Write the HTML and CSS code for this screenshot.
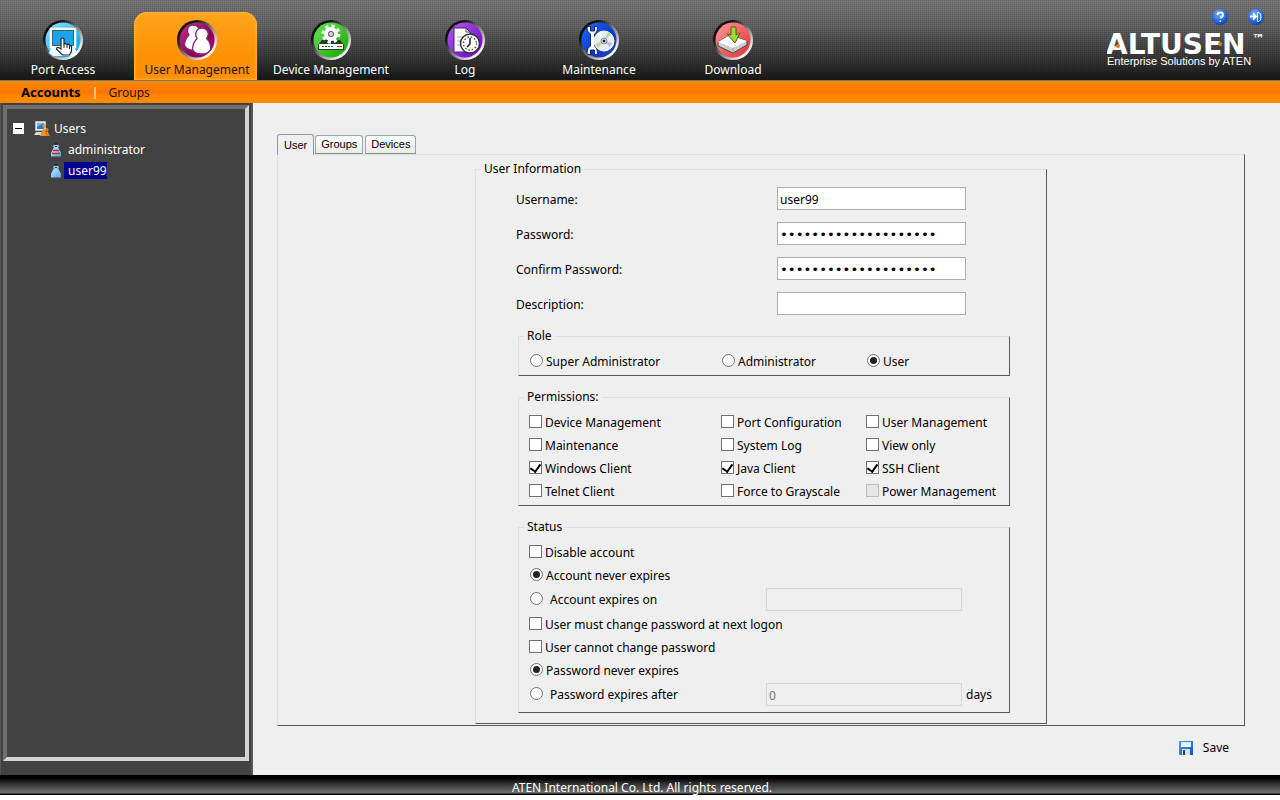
FILE: index.html
```html
<!DOCTYPE html>
<html lang="en">
<head>
  <meta charset="UTF-8">
  <meta name="viewport" content="width=device-width, initial-scale=1.0">
  <title>User Management</title>
  <link rel="stylesheet" href="styles.css">
</head>
<body>
  <!-- Shared gradients for the header icons -->
  <svg class="defs" aria-hidden="true">
    <defs>
      <linearGradient id="ring" x1="0" y1="0" x2="1" y2="1">
        <stop offset="0.25" stop-color="#111"/>
        <stop offset="0.6" stop-color="#999"/>
        <stop offset="0.85" stop-color="#fff"/>
      </linearGradient>
      <linearGradient id="cyan" x1="0" y1="0" x2="1" y2="1">
        <stop offset="0" stop-color="#8fe6ff"/>
        <stop offset="1" stop-color="#009be0"/>
      </linearGradient>
      <linearGradient id="plum" x1="0" y1="0" x2="1" y2="1">
        <stop offset="0" stop-color="#d0338c"/>
        <stop offset="0.6" stop-color="#8e004f"/>
        <stop offset="1" stop-color="#b80a70"/>
      </linearGradient>
      <linearGradient id="green" x1="0" y1="0" x2="1" y2="1">
        <stop offset="0" stop-color="#6de05a"/>
        <stop offset="1" stop-color="#12a800"/>
      </linearGradient>
      <linearGradient id="violet" x1="0" y1="0" x2="1" y2="1">
        <stop offset="0" stop-color="#b35cf0"/>
        <stop offset="1" stop-color="#6a00c4"/>
      </linearGradient>
      <linearGradient id="blue" x1="0" y1="0" x2="1" y2="1">
        <stop offset="0" stop-color="#1f6dff"/>
        <stop offset="0.6" stop-color="#0a35d0"/>
        <stop offset="1" stop-color="#2c4a9c"/>
      </linearGradient>
      <linearGradient id="red" x1="0" y1="0" x2="1" y2="1">
        <stop offset="0" stop-color="#ff9a94"/>
        <stop offset="1" stop-color="#e02f35"/>
      </linearGradient>
      <radialGradient id="ball" cx="0.4" cy="0.3" r="0.7">
        <stop offset="0" stop-color="#6fb0ff"/>
        <stop offset="1" stop-color="#0a44c0"/>
      </radialGradient>
      <linearGradient id="person" x1="0" y1="0" x2="1" y2="1">
        <stop offset="0" stop-color="#c8e8ff"/>
        <stop offset="1" stop-color="#4fa8f4"/>
      </linearGradient>
      <linearGradient id="disk" x1="0" y1="0" x2="1" y2="1">
        <stop offset="0" stop-color="#35a6ff"/>
        <stop offset="1" stop-color="#0b4fc4"/>
      </linearGradient>
      <linearGradient id="shutter" x1="0" y1="0" x2="0" y2="1">
        <stop offset="0" stop-color="#d4e4f4"/>
        <stop offset="1" stop-color="#fff"/>
      </linearGradient>
    </defs>
  </svg>

  <header class="header">
    <nav class="main-nav">
      <a href="#" class="nav-item">
        <svg viewBox="0 0 40 40">
          <circle cx="20" cy="20" r="20" fill="url(#ring)"/>
          <circle cx="20" cy="20" r="17.5" fill="url(#cyan)"/>
          <path d="M8 28h24l2 5-4 3H10l-4-3z" fill="#e8f8ff"/>
          <path d="M8 9h24v18H8z" fill="#1ba4e8" stroke="#fff" stroke-width="2.5"/>
          <path d="M9.500 10.500h21v15h-21z" fill="none" stroke="#35617c" stroke-width="1"/>
          <path d="M18 19q1.500-2 3 0v5l1.500-.5 1.500 1 1.500-.5 1 1.500 2 .5v5l-2 4h-7l-6-6q0-2 2-1.500l2.500 1.500z" fill="#fff" stroke="#222" stroke-width="1.200"/>
          <path d="M21 24v4M24 25v3M26.500 26v3" stroke="#222" stroke-width="1"/>
        </svg>
        <span>Port Access</span>
      </a>
      <a href="#" class="nav-item active">
        <svg viewBox="0 0 40 40">
          <circle cx="20" cy="20" r="20" fill="url(#ring)"/>
          <circle cx="20" cy="20" r="17.500" fill="url(#plum)"/>
          <g fill="#fff" stroke="#7d2b78" stroke-width="1.300">
            <path d="M16 5c4 0 6.500 3 6 6.500-.3 2-1 3-1.500 4.500l3 5-4 9c-6 1-10.500-1.500-12-4.500 0-5 2-8 4.500-10.500C9 11 10.500 5 16 5z"/>
            <path d="M25 8c4 0 6.500 3 6.200 6.500-.2 2-.9 3-1.700 4 3 2.500 4.500 6 4.300 11-2 3.500-6 4.500-9.800 4.500s-7.500-2-8.500-4.500c0-4.500 1.500-8 4.500-11C17 14 19.500 8 25 8z"/>
          </g>
        </svg>
        <span>User Management</span>
      </a>
      <a href="#" class="nav-item">
        <svg viewBox="0 0 40 40">
          <circle cx="20" cy="20" r="20" fill="url(#ring)"/>
          <circle cx="20" cy="20" r="17.500" fill="url(#green)"/>
          <path d="M11 20h18l4 5v5H7v-5z" fill="#2a3a2a"/>
          <path d="M8 24h24v5H8z" fill="#fff"/>
          <path d="M11 26.500h12" stroke="#248a24" stroke-dasharray="2 1"/>
          <path d="M26 26.500h5" stroke="#d22"/>
          <circle cx="20" cy="14" r="8" fill="none" stroke="#fff" stroke-width="3" stroke-dasharray="3.300 3"/>
          <circle cx="20" cy="14" r="5" fill="#8a8" stroke="#fff" stroke-width="4"/>
          <circle cx="20" cy="14" r="2.500" fill="#ddd" stroke="#555"/>
        </svg>
        <span>Device Management</span>
      </a>
      <a href="#" class="nav-item">
        <svg viewBox="0 0 40 40">
          <circle cx="20" cy="20" r="20" fill="url(#ring)"/>
          <circle cx="20" cy="20" r="17.500" fill="url(#violet)"/>
          <path d="M9 8h12l4 4v20H9z" fill="#fff" stroke="#46226b" stroke-width="1"/>
          <path d="M21 8v4h4" fill="none" stroke="#555"/>
          <path d="M12 17h6M12 21h4M12 25h4" stroke="#aaa"/>
          <circle cx="25" cy="23.500" r="9.500" fill="#fff" stroke="#333" stroke-width="1.500"/>
          <circle cx="25" cy="23.500" r="6.500" fill="#fff" stroke="#555" stroke-width="1.500" stroke-dasharray="1.500 1.900"/>
          <path d="M25 18v6l-3 3" fill="none" stroke="#222" stroke-width="1.500"/>
        </svg>
        <span>Log</span>
      </a>
      <a href="#" class="nav-item">
        <svg viewBox="0 0 40 40">
          <circle cx="20" cy="20" r="20" fill="url(#ring)"/>
          <circle cx="20" cy="20" r="17.500" fill="url(#blue)"/>
          <path d="M8 7c0 3 1 6 3.500 7v12C9 27 8 30 8 34l3.500 1v-5h4v5l3-1c0-4-1-7-3-8V14c2-1 3-4 3-7l-3-1v5h-4V6z" fill="#fff" stroke="#14275c" stroke-width="1"/>
          <circle cx="25" cy="21" r="10" fill="#e8eef2" stroke="#f8f8f8"/>
          <path d="M25 21l-7-7q3-3 6-3z" fill="#fafafa"/>
          <path d="M25 21l4-9 3 2z" fill="#9fdc9a"/>
          <path d="M25 21l8 2-2 4z" fill="#c8b2ee"/>
          <path d="M25 21l-9 3 3 4z" fill="#b7d7a8"/>
          <circle cx="25" cy="21" r="3" fill="#ccd" stroke="#889"/>
          <circle cx="25" cy="21" r="1.300" fill="#123"/>
        </svg>
        <span>Maintenance</span>
      </a>
      <a href="#" class="nav-item">
        <svg viewBox="0 0 40 40">
          <circle cx="20" cy="20" r="20" fill="url(#ring)"/>
          <circle cx="20" cy="20" r="17.500" fill="url(#red)"/>
          <path d="M5 22l12-7 17 6v4l-14 8-15-7z" fill="#ccc" stroke="#444" stroke-width="1"/>
          <path d="M5 22l12-7 17 6-14 7z" fill="#fff"/>
          <path d="M20 28v5" stroke="#999"/>
          <path d="M18 7h5v8l4-2-5 10-8-9 4 1z" fill="#a3d93c" stroke="#47631a" stroke-width="1"/>
        </svg>
        <span>Download</span>
      </a>
    </nav>

    <div class="brand">
      <div class="header-tools">
        <a href="#" aria-label="Help">
          <svg viewBox="0 0 16 16"><circle cx="8" cy="8" r="8" fill="url(#ball)"/><path d="M5.500 6V4.500h1v-1h3.500v1h1V7h-1v1H9v1.500M8.300 11.500v1.500" fill="none" stroke="#fff" stroke-width="1.500"/></svg>
        </a>
        <a href="#" aria-label="Logout">
          <svg viewBox="0 0 16 16"><circle cx="8" cy="8" r="8" fill="url(#ball)"/><path d="M2 7.500h5M5 4.500l3 3-3 3" fill="none" stroke="#fff" stroke-width="1.800"/><path d="M9.500 3.500h1.500q2 1 2 4.500t-2 4.500H9.500z" fill="none" stroke="#fff"/></svg>
        </a>
      </div>
      <svg class="logo" viewBox="0 -6 160 44" role="img">
        <text class="logo-name" x="-1" y="23">ALTUSEN</text>
        <text class="logo-mark" x="145" y="12">™</text>
        <text class="logo-sub" x="0" y="34">Enterprise Solutions by ATEN</text>
        <circle cx="11" cy="15" r="2" fill="#f57c00"/>
        <circle cx="113" cy="13" r="2" fill="#f57c00"/>
      </svg>
    </div>
  </header>

  <nav class="sub-nav">
    <a href="#" class="active">Accounts</a>
    <a href="#">Groups</a>
  </nav>

  <div class="layout">
    <aside class="sidebar">
      <div class="tree">
        <div class="tree-row">
          <button type="button" class="toggle" aria-label="Collapse"></button>
          <svg class="group-icon" viewBox="0 0 16 16">
            <path d="M1.500.5h10v9h-10z" fill="#e8e8e8" stroke="#bbb"/>
            <path d="M3 2h7v6H3z" fill="#2878c8"/>
            <path d="M3 2h7L3 6z" fill="#6cb4f0"/>
            <path d="M2 11h9l1 3H0z" fill="#d8d8d8"/>
            <circle cx="10" cy="5" r="1.800" fill="#f0932b"/>
            <path d="M10 6l3 9H6z" fill="#f0932b"/>
            <circle cx="13" cy="8.500" r="1.500" fill="#e87d1a"/>
            <path d="M13 9l3 6h-5z" fill="#e87d1a"/>
          </svg>
          <a href="#">Users</a>
        </div>
        <div class="tree-row child">
          <svg class="user-icon" viewBox="0 0 10 14">
            <path d="M2.500 5h5L10 10v3.500H0V10z" fill="url(#person)"/>
            <circle cx="5" cy="3" r="2.700" fill="#8ecbf8"/>
            <path d="M2.500 1.800q.5-1.800 2.500-1.800t2.500 1.800z" fill="#111"/>
            <path d="M4 3.500h2" stroke="#234"/>
            <path d="M2 7.500h6M1 10.500h8" stroke="#e0202a" stroke-width="1.500"/>
          </svg>
          <a href="#">administrator</a>
        </div>
        <div class="tree-row child">
          <svg class="user-icon" viewBox="0 0 10 14">
            <path d="M2.500 5h5L10 10v3.500H0V10z" fill="url(#person)"/>
            <circle cx="5" cy="3" r="2.700" fill="#8ecbf8"/>
            <path d="M2.500 1.800q.5-1.800 2.500-1.800t2.500 1.800z" fill="#111"/>
            <path d="M4 3.500h2" stroke="#234"/>
          </svg>
          <a href="#" class="selected">user99</a>
        </div>
      </div>
    </aside>

    <main class="content">
      <form>
        <div class="tabs">
          <button type="button" class="tab active">User</button>
          <button type="button" class="tab">Groups</button>
          <button type="button" class="tab">Devices</button>
        </div>

        <div class="panel">
          <fieldset class="user-info">
            <legend>User Information</legend>

            <div class="fields">
              <label for="username">Username:</label>
              <input type="text" id="username" value="user99">
              <label for="password">Password:</label>
              <input type="password" id="password" value="aaaaaaaaaaaaaaaaaaaa">
              <label for="confirm">Confirm Password:</label>
              <input type="password" id="confirm" value="aaaaaaaaaaaaaaaaaaaa">
              <label for="description">Description:</label>
              <input type="text" id="description">
            </div>

            <fieldset class="group">
              <legend>Role</legend>
              <div class="options">
                <label><input type="radio" name="role">Super Administrator</label>
                <label><input type="radio" name="role">Administrator</label>
                <label><input type="radio" name="role" checked>User</label>
              </div>
            </fieldset>

            <fieldset class="group">
              <legend>Permissions:</legend>
              <div class="options">
                <label><input type="checkbox">Device Management</label>
                <label><input type="checkbox">Port Configuration</label>
                <label><input type="checkbox">User Management</label>
                <label><input type="checkbox">Maintenance</label>
                <label><input type="checkbox">System Log</label>
                <label><input type="checkbox">View only</label>
                <label><input type="checkbox" checked>Windows Client</label>
                <label><input type="checkbox" checked>Java Client</label>
                <label><input type="checkbox" checked>SSH Client</label>
                <label><input type="checkbox">Telnet Client</label>
                <label><input type="checkbox">Force to Grayscale</label>
                <label><input type="checkbox" disabled>Power Management</label>
              </div>
            </fieldset>

            <fieldset class="group">
              <legend>Status</legend>
              <div class="status">
                <label><input type="checkbox">Disable account</label>
                <label><input type="radio" name="account" checked>Account never expires</label>
                <div class="expiry">
                  <label><input type="radio" name="account">Account expires on</label>
                  <input type="text" aria-label="Account expiry date" disabled>
                </div>
                <label><input type="checkbox">User must change password at next logon</label>
                <label><input type="checkbox">User cannot change password</label>
                <label><input type="radio" name="pwd" checked>Password never expires</label>
                <div class="expiry">
                  <label><input type="radio" name="pwd">Password expires after</label>
                  <input type="text" aria-label="Password expiry days" value="0" disabled>
                  <span>days</span>
                </div>
              </div>
            </fieldset>
          </fieldset>
        </div>

        <div class="actions">
          <button type="submit" class="save-btn">
            <svg viewBox="0 0 14 14">
              <path d="M0 0h14v14H1l-1-1z" fill="url(#disk)"/>
              <path d="M2 1h10v5H2z" fill="url(#shutter)"/>
              <path d="M3 8h8v6H3z" fill="#ddd"/>
              <path d="M4 9h2v5H4z" fill="#14418f"/>
            </svg>
            Save
          </button>
        </div>
      </form>
    </main>
  </div>

  <footer class="footer">ATEN International Co. Ltd. All rights reserved.</footer>
</body>
</html>
```

FILE: styles.css
```css
:root {
  --bg: #efefef;
  --dark: #424242;
  --line-light: #dfdfdf;
  --line-dark: #555a5a;
}

* {
  box-sizing: border-box;
}

body {
  margin: 0;
  padding-bottom: 5px;
  min-height: 100vh;
  display: flex;
  flex-direction: column;
  font-family: "Noto Sans", Tahoma, sans-serif;
  font-size: 12px;
  line-height: 18px;
  color: #000;
  background: #fff;
}

a {
  color: inherit;
  text-decoration: none;
}

button, input {
  font: inherit;
  color: inherit;
}

svg {
  display: block;
  flex: none;
}

.defs {
  position: absolute;
  width: 0;
  height: 0;
}

/* Header */
.header {
  height: 81px;
  display: flex;
  justify-content: space-between;
  border-bottom: 1px solid #777;
  background:
    repeating-linear-gradient(90deg, rgba(0,0,0,0.1) 0 1px, transparent 1px 2px),
    repeating-linear-gradient(rgba(0,0,0,0.1) 0 1px, transparent 1px 2px),
    linear-gradient(#7e7e7e, #6a6a6a 30%, #191919);
}

.main-nav {
  display: flex;
  gap: 11px;
  padding-top: 12px;
}

.nav-item {
  width: 123px;
  padding: 8px 0 0 3px;
  display: flex;
  flex-direction: column;
  align-items: center;
  gap: 1px;
  color: #fff;
  white-space: nowrap;
}

.nav-item svg {
  width: 40px;
  height: 40px;
}

.nav-item.active {
  color: #221100;
  border-radius: 13px 13px 0 0;
  background: linear-gradient(#ffa41c, #ff9608 50%, #ff8d00);
  box-shadow: inset 0 0 3px 1px #ffb640;
}

.brand {
  padding: 9px 13px 0 0;
}

.header-tools {
  display: flex;
  justify-content: flex-end;
  gap: 20px;
  padding-right: 3px;
}

.header-tools svg {
  width: 16px;
  height: 16px;
}

.logo {
  width: 160px;
  height: 44px;
}

.logo text {
  fill: #fff;
  font-family: "DejaVu Sans", sans-serif;
}

.logo .logo-name {
  font-size: 28px;
  font-weight: bold;
}

.logo .logo-mark {
  font-size: 12px;
  font-weight: bold;
}

.logo .logo-sub {
  font-family: "Liberation Sans", Arial, sans-serif;
  font-size: 11px;
}

/* Sub navigation */
.sub-nav {
  height: 22px;
  display: flex;
  align-items: center;
  padding-left: 21px;
  line-height: 22px;
  background: linear-gradient(#ff8a00, #ff7600 50%, #ff8a00 75%);
}

.sub-nav a + a {
  margin: 1px 0 0 13px;
  padding-left: 13px;
  color: #221100;
  line-height: 12px;
  border-left: 2px solid #ffc184;
}

.sub-nav .active {
  font-size: 13px;
  font-weight: bold;
}

/* Sidebar */
.layout {
  flex: 1;
  display: flex;
  background: var(--bg);
}

.sidebar {
  width: 253px;
  flex: none;
  display: flex;
  padding: 2px 2px 14px;
  border-left: 1px solid #555;
  border-right: 2px solid #555;
  background: var(--dark);
  color: #fff;
}

.tree {
  flex: 1;
  padding: 9px 6px;
  border: 4px solid;
  border-color: #6e6e6e #d3d3d3 #d3d3d3 #6e6e6e;
}

.tree-row {
  height: 21px;
  display: flex;
  align-items: center;
}

.tree-row.child {
  padding-left: 38px;
}

.toggle {
  width: 11px;
  height: 11px;
  padding: 0;
  border: 1px solid #fff;
  background: linear-gradient(#000, #000) center / 7px 1px no-repeat #fff;
}

.group-icon {
  width: 16px;
  height: 16px;
  margin: 0 4px 0 10px;
}

.user-icon {
  width: 10px;
  height: 14px;
  margin-right: 3px;
}

.child a {
  padding-left: 4px;
  line-height: 17px;
}

.tree-row .selected {
  background: #00008f;
}

/* Content */
.content {
  flex: 1;
  padding: 31px 35px 16px 24px;
}

.tabs {
  display: flex;
  align-items: flex-end;
}

.tab {
  height: 19px;
  margin-right: 2px;
  padding: 0 5px;
  border: 1px solid #91a7b4;
  border-bottom-color: #7f8f95;
  border-radius: 3px 3px 0 0;
  background: linear-gradient(#fff, #ecebe4);
  font-family: "Liberation Sans", Arial, sans-serif;
  font-size: 11px;
  line-height: 15px;
}

.tab.active {
  height: 21px;
  margin: 0 1px -1px 0;
  padding: 0 6px;
  border-color: #919b9c;
  border-bottom: 0;
  background: var(--bg);
  z-index: 1;
}

.panel {
  padding: 5px 0 1px;
  border: 1px solid;
  border-color: var(--line-light) var(--line-dark) var(--line-dark) var(--line-light);
}

fieldset {
  margin: 0;
  border: 1px solid;
  border-color: var(--line-light) var(--line-dark) var(--line-dark) var(--line-light);
}

legend {
  padding: 0 3px;
}

.user-info {
  width: 572px;
  margin: 0 auto;
  padding: 9px 36px 10px 5px;
}

.fields {
  display: grid;
  grid-template-columns: 261px 189px;
  row-gap: 12px;
  align-items: center;
  padding-left: 35px;
}

.fields label {
  padding-top: 2px;
}

input[type="text"],
input[type="password"] {
  height: 23px;
  padding: 2px 2px 0;
  border: 1px solid #abadb3;
  border-radius: 0;
  background: #fff;
}

input[type="password"] {
  font-family: "DejaVu Sans Mono", monospace;
  font-size: 13px;
}

input[type="text"]:disabled {
  border-color: #d6d6d6;
  background: var(--bg);
  color: #777;
}

.group {
  margin: 12px 0 0 37px;
  padding: 4px 5px 3px;
}

.options {
  display: grid;
  grid-template-columns: 192px 145px 1fr;
  grid-auto-rows: 23px;
  padding-left: 5px;
}

.options label,
.status label {
  display: flex;
  align-items: center;
  gap: 3px;
  padding-top: 2px;
  white-space: nowrap;
}

.status {
  padding: 0 0 2px 5px;
}

.status > label {
  height: 23px;
}

.expiry {
  height: 26px;
  display: grid;
  grid-template-columns: 237px 196px auto;
  align-items: center;
}

.expiry label {
  gap: 7px;
}

.expiry span {
  padding: 2px 0 0 4px;
}

input[type="checkbox"],
input[type="radio"] {
  appearance: none;
  display: grid;
  place-items: center;
  width: 13px;
  height: 13px;
  margin: 0 0 3px;
  border: 1px solid #707070;
  background: #fff;
}

input[type="radio"] {
  margin-left: 1px;
  border-radius: 50%;
}

input[type="radio"]:checked::after {
  content: "";
  width: 7px;
  height: 7px;
  border-radius: 50%;
  background: #222;
}

input[type="checkbox"]:checked::after {
  content: "";
  width: 5px;
  height: 8px;
  margin-bottom: 3px;
  border: solid #000;
  border-width: 0 2px 2px 0;
  transform: rotate(35deg);
}

input[type="checkbox"]:disabled {
  border-color: #bcbcbc;
  background: #e6e6e6;
}

.actions {
  display: flex;
  justify-content: flex-end;
  padding: 13px 16px 0 0;
}

.save-btn {
  display: flex;
  align-items: center;
  gap: 10px;
  padding: 0;
  border: 0;
  background: none;
}

.save-btn svg {
  width: 14px;
  height: 14px;
}

/* Footer */
.footer {
  height: 20px;
  padding: 4px 0 0 4px;
  text-align: center;
  color: #fff;
  background: linear-gradient(#000 15%, #333 45%, #707070 90%, #000 95%);
}
```
